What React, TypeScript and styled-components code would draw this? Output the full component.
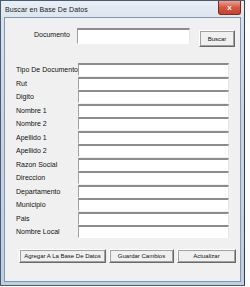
import * as React from 'react'
import styled, { createGlobalStyle } from 'styled-components'

const GlobalStyle = createGlobalStyle`
  html, body {
    margin: 0;
    padding: 0;
    background: #ffffff;
  }
  body {
    font-family: "Liberation Sans", Arial, sans-serif;
  }
`

const fields = [
  'Tipo De Documento',
  'Rut',
  'Digito',
  'Nombre 1',
  'Nombre 2',
  'Apellido 1',
  'Apellido 2',
  'Razon Social',
  'Direccion',
  'Departamento',
  'Municipio',
  'Pais',
  'Nombre Local'
]

const Window = styled.div`
  width: 245px;
  height: 286px;
  box-sizing: border-box;
  border: 1px solid #4a5a70;
  border-right-color: #2f3f56;
  background: linear-gradient(to bottom, #dbe5f1 0%, #c7d5e6 40%, #bfcfe2 100%);
  display: flex;
  flex-direction: column;
`

const TitleBar = styled.div`
  height: 16px;
  display: flex;
  align-items: center;
  justify-content: space-between;
  padding-left: 4px;
  background: linear-gradient(to bottom, #e9eef5, #dde5ef);
`

const Title = styled.span`
  font-size: 7px;
  color: #1a1a1a;
  letter-spacing: 0.1px;
`

const CloseButton = styled.div`
  width: 23px;
  height: 14px;
  margin-right: 3px;
  align-self: flex-start;
  border: 1px solid #7a2b22;
  border-top: none;
  border-radius: 0 0 3px 3px;
  box-sizing: border-box;
  background: linear-gradient(to bottom, #e8a394 0%, #d8563f 50%, #c7412c 100%);
  color: #ffffff;
  font-size: 8px;
  font-weight: bold;
  display: flex;
  align-items: center;
  justify-content: center;
`

const Client = styled.div`
  flex: 1;
  margin: 0 3px 3px 3px;
  border: 1px solid #8597b0;
  background: #f0f0f0;
  display: flex;
  flex-direction: column;
`

const SearchRow = styled.div`
  display: flex;
  align-items: flex-start;
  margin-top: 10px;
  padding-left: 29px;
`

const SearchLabel = styled.span`
  width: 43px;
  font-size: 7px;
  color: #111;
  line-height: 10px;
  padding-top: 2px;
`

const TextBox = styled.div<{ $width: number; $height: number }>`
  width: ${({ $width }) => $width}px;
  height: ${({ $height }) => $height}px;
  box-sizing: border-box;
  background: #ffffff;
  border-top: 2px solid #8c8c8c;
  border-left: 1px solid #a0a0a0;
  border-right: 1px solid #e6e6e6;
  border-bottom: 1px solid #ffffff;
`

const Button = styled.div<{ $width: number }>`
  width: ${({ $width }) => $width}px;
  height: 14px;
  box-sizing: border-box;
  background: #f0f0f0;
  border-top: 1px solid #ffffff;
  border-left: 1px solid #ffffff;
  border-right: 1px solid #696969;
  border-bottom: 1px solid #696969;
  box-shadow: 1px 1px 0 #a0a0a0 inset, -1px -1px 0 #a0a0a0 inset;
  font-size: 6px;
  color: #111;
  display: flex;
  align-items: center;
  justify-content: center;
  white-space: nowrap;
`

const SearchButton = styled(Button)`
  height: 17px;
  margin-left: 9px;
  margin-top: 2px;
`

const FieldGrid = styled.div`
  display: grid;
  grid-template-columns: 62px 151px;
  grid-auto-rows: 13.5px;
  margin-top: 16px;
  padding-left: 11px;
`

const FieldLabel = styled.span`
  font-size: 7px;
  color: #111;
  display: flex;
  align-items: center;
  white-space: nowrap;
`

const FieldCell = styled.div`
  display: flex;
  align-items: flex-start;
`

const ButtonRow = styled.div`
  display: flex;
  gap: 3px;
  margin-top: 10px;
  padding-left: 14px;
`

export default function App() {
  return (
    <>
      <GlobalStyle />
      <Window>
        <TitleBar>
          <Title>Buscar en Base De Datos</Title>
          <CloseButton>x</CloseButton>
        </TitleBar>
        <Client>
          <SearchRow>
            <SearchLabel>Documento</SearchLabel>
            <TextBox $width={113} $height={16} />
            <SearchButton $width={36}>Buscar</SearchButton>
          </SearchRow>
          <FieldGrid>
            {fields.map(label => (
              <React.Fragment key={label}>
                <FieldLabel>{label}</FieldLabel>
                <FieldCell>
                  <TextBox $width={151} $height={13} />
                </FieldCell>
              </React.Fragment>
            ))}
          </FieldGrid>
          <ButtonRow>
            <Button $width={87}>Agregar A La Base De Datos</Button>
            <Button $width={65}>Guardar Cambios</Button>
            <Button $width={59}>Actualizar</Button>
          </ButtonRow>
        </Client>
      </Window>
    </>
  )
}
